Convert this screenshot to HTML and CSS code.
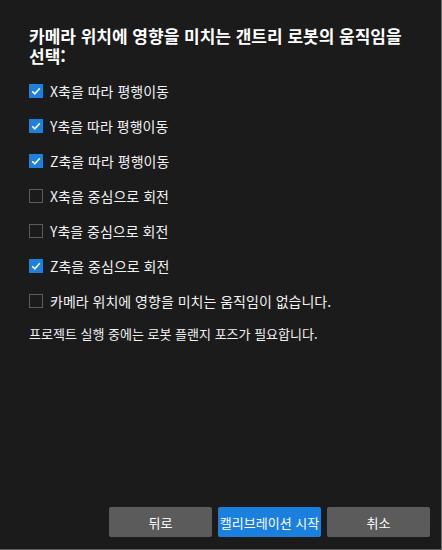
FILE: index.html
```html
<!DOCTYPE html>
<html lang="ko">
<head>
<meta charset="utf-8">
<link rel="stylesheet" href="styles.css">
</head>
<body>
<div class="dialog">
  <div class="content">
    <h1 class="title">카메라 위치에 영향을 미치는 갠트리 로봇의 움직임을 선택:</h1>
    <ul class="options">
      <li class="option"><span class="box checked"><svg viewBox="0 0 14 14"><path d="M3.2 7.2 L5.8 9.8 L10.8 4.2" /></svg></span>X축을 따라 평행이동</li>
      <li class="option"><span class="box checked"><svg viewBox="0 0 14 14"><path d="M3.2 7.2 L5.8 9.8 L10.8 4.2" /></svg></span>Y축을 따라 평행이동</li>
      <li class="option"><span class="box checked"><svg viewBox="0 0 14 14"><path d="M3.2 7.2 L5.8 9.8 L10.8 4.2" /></svg></span>Z축을 따라 평행이동</li>
      <li class="option"><span class="box"></span>X축을 중심으로 회전</li>
      <li class="option"><span class="box"></span>Y축을 중심으로 회전</li>
      <li class="option"><span class="box checked"><svg viewBox="0 0 14 14"><path d="M3.2 7.2 L5.8 9.8 L10.8 4.2" /></svg></span>Z축을 중심으로 회전</li>
      <li class="option"><span class="box"></span>카메라 위치에 영향을 미치는 움직임이 없습니다.</li>
    </ul>
    <p class="note">프로젝트 실행 중에는 로봇 플랜지 포즈가 필요합니다.</p>
  </div>
  <div class="footer">
    <button class="btn">뒤로</button>
    <button class="btn primary">캘리브레이션 시작</button>
    <button class="btn">취소</button>
  </div>
</div>
</body>
</html>
```
FILE: styles.css
```css
html, body {
  margin: 0;
  padding: 0;
  background: #1b1b1b;
}
body {
  width: 442px;
  height: 550px;
  font-family: "Noto Sans CJK KR", "Noto Sans", sans-serif;
  color: #ffffff;
}
.dialog {
  box-sizing: border-box;
  width: 442px;
  height: 550px;
  display: flex;
  flex-direction: column;
  border-right: 1px solid #6a6a6a;
  border-bottom: 1px solid #5e5e5e;
}
.content {
  flex: 1;
  padding: 26px 30px 0 29px;
}
.title {
  margin: 0;
  font-size: 17px;
  font-weight: bold;
  line-height: 20px;
  color: #ffffff;
}
.options {
  list-style: none;
  margin: 14px 0 0 0;
  padding: 0;
  display: flex;
  flex-direction: column;
  gap: 14px;
}
.option {
  display: flex;
  align-items: center;
  gap: 7px;
  height: 21px;
  font-size: 14px;
  color: #f2f2f2;
}
.box {
  box-sizing: border-box;
  width: 14px;
  height: 14px;
  border: 1px solid #5c5c5c;
  flex: none;
  display: flex;
}
.box.checked {
  background: #1c80dc;
  border-color: #1c80dc;
}
.box svg {
  width: 14px;
  height: 14px;
  margin: -1px;
}
.box svg path {
  fill: none;
  stroke: #ffffff;
  stroke-width: 1.6;
}
.note {
  margin: 14px 0 0 0;
  font-size: 13px;
  line-height: 18px;
  color: #f2f2f2;
}
.footer {
  display: flex;
  justify-content: flex-end;
  gap: 6px;
  padding: 0 11px 12px 0;
}
.btn {
  width: 103px;
  height: 30px;
  border: none;
  border-radius: 2px;
  background: #5b5b5b;
  color: #ffffff;
  font-family: "Noto Sans CJK KR", "Noto Sans", sans-serif;
  font-size: 13px;
  padding: 0;
}
.btn.primary {
  background: #1b7fde;
}
```
